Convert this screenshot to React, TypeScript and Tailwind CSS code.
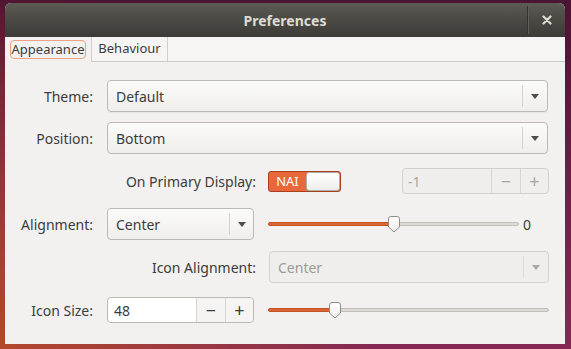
import React from "react";

const FONT = "font-['Noto_Sans','DejaVu_Sans',sans-serif]";

function Arrow({ disabled }: { disabled?: boolean }) {
  return (
    <div
      className={`h-0 w-0 border-x-[4px] border-t-[5px] border-x-transparent ${
        disabled ? "border-t-[#a9a7a3]" : "border-t-[#4e4d4a]"
      }`}
    />
  );
}

function Handle() {
  return (
    <svg width="14" height="17" viewBox="0 0 14 17" className="block">
      <defs>
        <linearGradient id="hg" x1="0" y1="0" x2="0" y2="1">
          <stop offset="0" stopColor="#ffffff" />
          <stop offset="1" stopColor="#eeedeb" />
        </linearGradient>
      </defs>
      <path
        d="M1.5 3 Q1.5 0.5 4 0.5 H10 Q12.5 0.5 12.5 3 V11 L7 16 L1.5 11 Z"
        fill="url(#hg)"
        stroke="#8f8c86"
        strokeWidth="1"
      />
    </svg>
  );
}

function Slider({ pct, widthClass }: { pct: number; widthClass: string }) {
  return (
    <div className={`relative h-[20px] ${widthClass}`}>
      <div className="absolute left-0 right-0 top-[8px] h-[4px] rounded-full border border-[#c2bfba] bg-[#dcdad6]" />
      <div
        className="absolute left-0 top-[8px] h-[4px] rounded-full bg-[#dd6332] border border-[#c4532a]"
        style={{ width: `${pct}%` }}
      />
      <div
        className="absolute top-[2px] -ml-[7px]"
        style={{ left: `${pct}%` }}
      >
        <Handle />
      </div>
    </div>
  );
}

export default function App() {
  return (
    <div
      className={`${FONT} h-[349px] w-[571px] overflow-hidden bg-[radial-gradient(circle_at_0%_100%,#b2482c_0%,rgba(160,60,50,0)_55%),linear-gradient(180deg,#4a1432_0%,#6b1f45_50%,#842a52_100%)] pl-[5px] pt-[3px]`}
    >
      <div className="flex h-[341px] w-[560px] flex-col overflow-hidden rounded-t-[6px] bg-[#f2f1f0]">
        {/* Title bar */}
        <div className="flex h-[34px] items-center bg-[linear-gradient(180deg,#5c5b54_0%,#4a4944_50%,#3c3b37_100%)]">
          <div className="flex-1 text-center text-[14px] font-bold text-[#dfdbd2] pl-[38px]">
            Preferences
          </div>
          <div className="h-[28px] w-[1px] bg-[#34332f] shadow-[1px_0_0_#5f5e57]" />
          <div className="flex w-[37px] items-center justify-center">
            <svg width="10" height="10" viewBox="0 0 10 10">
              <path d="M1.5 1.5 L8.5 8.5 M8.5 1.5 L1.5 8.5" stroke="#dfdbd2" strokeWidth="2.2" strokeLinecap="round" />
            </svg>
          </div>
        </div>

        {/* Tabs */}
        <div className="flex h-[25px] border-b border-[#cdcac5] bg-[#f6f5f4]">
          <div className="flex w-[87px] items-center justify-center border-r border-[#d2cfca] bg-[#f2f1f0] -mb-[1px]">
            <div className="flex h-[19px] items-center rounded-[4px] border border-[#efa185] px-[1px] text-[13px] leading-none text-[#3c3c3c]">
              Appearance
            </div>
          </div>
          <div className="flex w-[76px] items-center justify-center border-r border-[#d2cfca] text-[13px] text-[#3c3c3c]">
            Behaviour
          </div>
        </div>

        {/* Body */}
        <div className="flex flex-col pt-[18px] text-[14px] text-[#3c3c3c]">
          {/* Theme */}
          <div className="flex items-center">
            <div className="w-[88px] text-right">Theme:</div>
            <div className="ml-[14px] flex h-[32px] w-[441px] items-center rounded-[4px] border border-[#bcb9b4] bg-[linear-gradient(180deg,#fbfbfa,#efeeec)] shadow-[0_1px_0_rgba(0,0,0,0.04)]">
              <div className="flex-1 pl-[8px]">Default</div>
              <div className="h-[22px] w-[1px] bg-[#d4d2ce]" />
              <div className="flex w-[24px] items-center justify-center">
                <Arrow />
              </div>
            </div>
          </div>

          {/* Position */}
          <div className="mt-[10px] flex items-center">
            <div className="w-[88px] text-right">Position:</div>
            <div className="ml-[14px] flex h-[32px] w-[441px] items-center rounded-[4px] border border-[#bcb9b4] bg-[linear-gradient(180deg,#fbfbfa,#efeeec)]">
              <div className="flex-1 pl-[8px]">Bottom</div>
              <div className="h-[22px] w-[1px] bg-[#d4d2ce]" />
              <div className="flex w-[24px] items-center justify-center">
                <Arrow />
              </div>
            </div>
          </div>

          {/* On Primary Display */}
          <div className="mt-[14px] flex items-center">
            <div className="w-[251px] text-right">On Primary Display:</div>
            <div className="ml-[12px] flex h-[21px] w-[73px] items-center rounded-[3px] border border-[#a8401c] bg-[#e8683a]">
              <div className="w-[37px] text-center text-[13px] leading-none text-white">NAI</div>
              <div className="h-[19px] flex-1 rounded-[3px] border border-[#b0ada8] bg-[linear-gradient(180deg,#ffffff,#efeeec)]" />
            </div>
            <div className="ml-[61px] flex h-[26px] w-[147px] items-center rounded-[4px] border border-[#d3d0cb] bg-[#efeeec] text-[#a8a6a2]">
              <div className="flex-1 pl-[5px]">-1</div>
              <div className="flex h-full w-[29px] items-center justify-center border-l border-[#d8d6d2] text-[18px] leading-none">−</div>
              <div className="flex h-full w-[28px] items-center justify-center border-l border-[#d8d6d2] text-[18px] leading-none">+</div>
            </div>
          </div>

          {/* Alignment */}
          <div className="mt-[14px] flex items-center">
            <div className="w-[88px] text-right">Alignment:</div>
            <div className="ml-[14px] flex h-[32px] w-[147px] items-center rounded-[4px] border border-[#bcb9b4] bg-[linear-gradient(180deg,#fbfbfa,#efeeec)]">
              <div className="flex-1 pl-[8px]">Center</div>
              <div className="h-[22px] w-[1px] bg-[#d4d2ce]" />
              <div className="flex w-[23px] items-center justify-center">
                <Arrow />
              </div>
            </div>
            <div className="ml-[14px]">
              <Slider pct={50} widthClass="w-[251px]" />
            </div>
            <div className="ml-[4px]">0</div>
          </div>

          {/* Icon Alignment */}
          <div className="mt-[11px] flex items-center">
            <div className="w-[251px] text-right">Icon Alignment:</div>
            <div className="ml-[13px] flex h-[32px] w-[280px] items-center rounded-[4px] border border-[#d3d0cb] bg-[#efeeec] text-[#9c9a96]">
              <div className="flex-1 pl-[8px]">Center</div>
              <div className="h-[22px] w-[1px] bg-[#dddbd7]" />
              <div className="flex w-[24px] items-center justify-center">
                <Arrow disabled />
              </div>
            </div>
          </div>

          {/* Icon Size */}
          <div className="mt-[14px] flex items-center">
            <div className="w-[88px] text-right">Icon Size:</div>
            <div className="ml-[14px] flex h-[26px] w-[147px] items-center rounded-[4px] border border-[#bcb9b4] bg-white">
              <div className="flex-1 pl-[6px]">48</div>
              <div className="flex h-full w-[29px] items-center justify-center border-l border-[#d8d6d2] bg-[#f5f4f3] text-[18px] leading-none">−</div>
              <div className="flex h-full w-[28px] items-center justify-center rounded-r-[4px] border-l border-[#d8d6d2] bg-[#f5f4f3] text-[18px] leading-none">+</div>
            </div>
            <div className="ml-[14px]">
              <Slider pct={24} widthClass="w-[281px]" />
            </div>
          </div>
        </div>
      </div>
    </div>
  );
}
